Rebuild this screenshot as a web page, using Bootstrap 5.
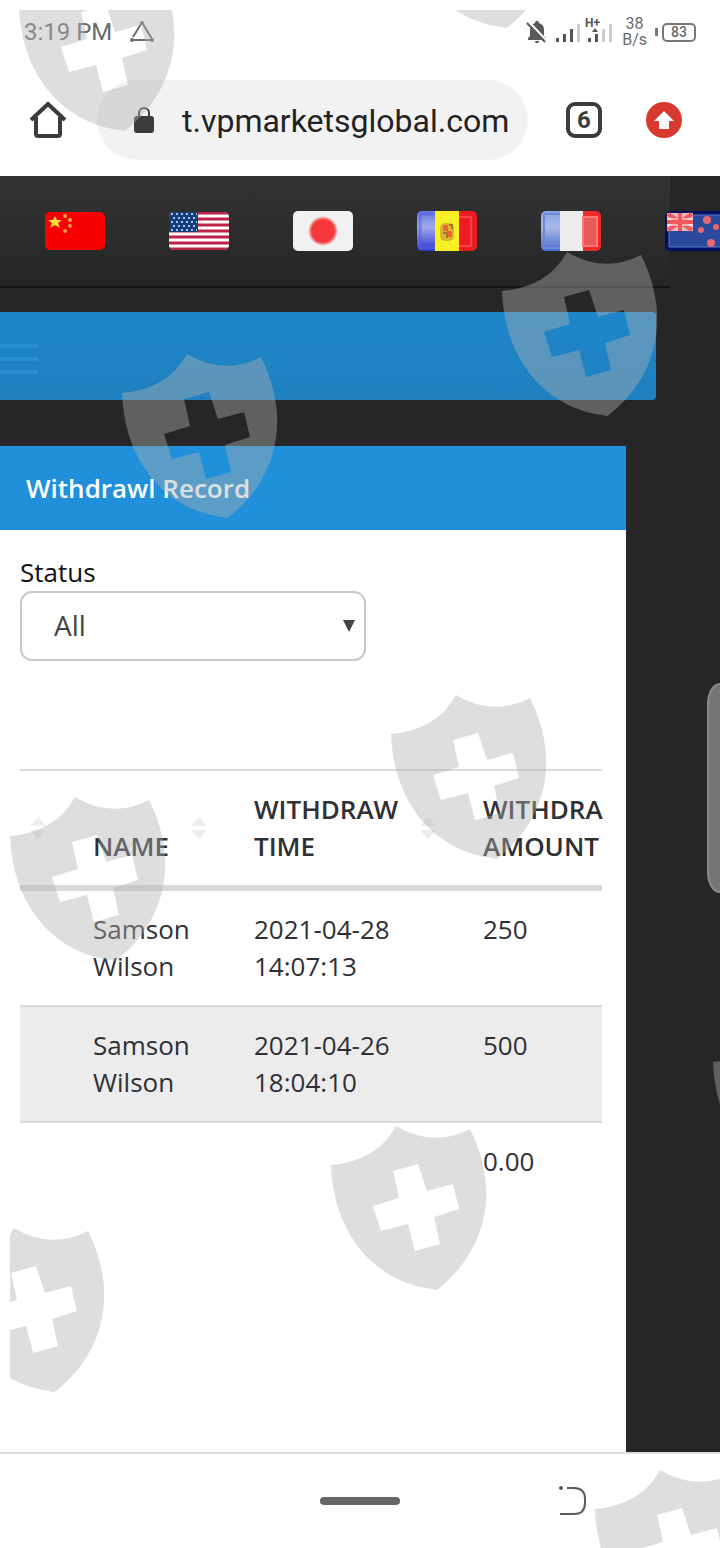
<!DOCTYPE html>
<html lang="en">
<head>
<meta charset="utf-8">
<meta name="viewport" content="width=device-width, initial-scale=1">
<title>Withdrawl Record</title>
<link href="https://cdn.jsdelivr.net/npm/bootstrap@5.3.0/dist/css/bootstrap.min.css" rel="stylesheet">
<style>
  body { font-family: "Open Sans", sans-serif; background: #262626; color: #333; }
  .screen { min-height: 100vh; overflow: hidden; }
  .phone-font { font-family: Roboto, sans-serif; }

  .status-bar { height: 64px; padding: 0 24px; color: #6b6b6b; }
  .clock { font-size: 24px; line-height: 28px; }
  .net-speed { font-size: 16px; line-height: 16px; text-align: center; }
  .battery { width: 34px; height: 19px; border: 2px solid #777; border-radius: 5px; font-size: 14px; line-height: 15px; font-weight: 500; text-align: center; }
  .battery-tip { width: 3px; height: 8px; background: #777; }

  .url-bar { height: 112px; padding: 0 38px 0 29px; }
  .url-pill { height: 80px; min-width: 0; border-radius: 40px; background: #f2f2f2; margin-left: 30px; margin-right: 38px; padding-left: 36px; gap: 27px; }
  .url-field { width: 0; font-size: 32px; line-height: 40px; color: #222; border: 0; background: transparent; padding: 2px 0 0; outline: 0; }
  .tab-count { width: 36px; height: 36px; border: 4px solid #3c3c3c; border-radius: 9px; font-size: 24px; line-height: 28px; font-weight: 700; color: #3c3c3c; background: none; margin-right: 44px; }
  .bare { border: 0; padding: 0; background: none; }

  .flag-bar { height: 112px; margin-right: 50px; padding-left: 45px; gap: 64px; background: linear-gradient(#333, #262626); border-bottom: 2px solid #141414; }
  .flag-bar svg { border-radius: 5px; }
  .menu-bar { height: 88px; margin: 24px 64px 46px 0; padding-top: 6px; background: linear-gradient(#1c86c9, #2080c0); border-radius: 0 4px 4px 0; }
  .menu-lines { width: 38px; height: 30px; }
  .menu-lines i { height: 4px; background: #288ed2; }

  .record { margin-right: 94px; }
  .record-head { height: 84px; padding: 0 26px; background: #2090da; font-size: 26px; line-height: 36px; font-weight: 600; }
  .record-body { padding: 24px 24px 0 20px; }
  .status-label { font-size: 26px; line-height: 37px; color: #111; }
  .status-select { width: 346px; height: 70px; padding: 0 32px 2px; border: 2px solid #c8c8c8; border-radius: 12px; color: #444; font-size: 28px; line-height: 38px;
    background: #fff url("data:image/svg+xml,%3Csvg xmlns='http://www.w3.org/2000/svg' viewBox='0 0 12 12'%3E%3Cpath d='M0 0h12L6 12z' fill='%23444'/%3E%3C/svg%3E") no-repeat right 9px center / 12px 12px; }

  .record-scroll { margin-top: 108px; border-top: 2px solid #dadada; }
  .record-table { table-layout: fixed; font-size: 26px; line-height: 37px; border-collapse: separate; border-spacing: 0; color: #2f2f36; }
  .record-table th, .record-table td { padding: 20px 0 20px 16px; vertical-align: top; border: 0; }
  .record-table td { padding-right: 16px; }
  .record-table th { font-weight: 600; vertical-align: bottom; border-bottom: 6px solid #dadada; }
  .record-table th:not(:last-child) {
    background: url("data:image/svg+xml,%3Csvg xmlns='http://www.w3.org/2000/svg' viewBox='0 0 16 22'%3E%3Cpath d='M0 9 8 0l8 9zM0 13h16l-8 9z' fill='%23ededed'/%3E%3C/svg%3E") no-repeat right 31px center / 16px 22px; }
  .record-table tbody td { border-bottom: 2px solid #dadada; }
  .record-table tbody tr:nth-child(even) { background: #ececec; }
  .w-index { width: 57px; } .w-name { width: 161px; } .w-time { width: 229px; }
  .record-table .w-time { padding-right: 60px; }

  .gesture-bar { height: 96px; border-top: 2px solid #dcdcdc; display: grid; grid-template-columns: 1fr 80px 1fr; align-items: center; }
  .home-pill { height: 8px; border-radius: 4px; background: #666; }
  .back-key { margin-left: 158px; justify-self: start; }

  .shields { pointer-events: none; z-index: 5; }
  .edge-handle { top: 683px; width: 13px; height: 210px; background: #757575; border: 2px solid #8a8a8a; border-right: 0; border-radius: 20px 0 0 20px / 32px 0 0 32px; }
</style>
</head>
<body>
<div class="screen position-relative d-flex flex-column">

  <header class="bg-white phone-font">
    <div class="status-bar d-flex align-items-center">
      <span class="clock me-3">3:19 PM</span>
      <svg width="28" height="24" viewBox="0 0 28 24" fill="none" stroke="#6b6b6b" stroke-width="2"><path d="M13 4 5 17M6 20h17M15 4l9 15"/><g fill="#6b6b6b" stroke="none"><circle cx="14" cy="3" r="2"/><circle cx="4" cy="20" r="2"/><circle cx="24" cy="20" r="2"/></g></svg>
      <div class="d-flex align-items-center ms-auto">
        <svg width="88" height="32" viewBox="0 0 88 32">
          <path d="M2 24v-2l2-2v-6c0-4 2-6 5-7 0-3 4-3 4 0 3 1 5 3 5 7v6l2 2v2zM9 25h4c0 3-4 3-4 0z" fill="#5a5a5a"/>
          <path d="M3 6l19 20" stroke="#fff" stroke-width="2"/><path d="M1 7l18 19" stroke="#5a5a5a" stroke-width="2"/>
          <g fill="#555"><path d="M30 22h3v4h-3zM37 18h3v8h-3zM44 13h3v13h-3zM62 22h3v4h-3zM69 18h3v8h-3zM66 16l3-4 3 4z"/></g>
          <g fill="#ccc"><path d="M51 8h3v18h-3zM76 13h3v13h-3zM83 8h3v18h-3z"/></g>
          <text x="59" y="11" font-size="12" font-weight="700" fill="#555">H+</text>
        </svg>
        <div class="net-speed ms-2">38<br>B/s</div>
        <span class="battery-tip ms-2 me-1"></span>
        <div class="battery">83</div>
      </div>
    </div>
    <div class="url-bar d-flex align-items-center">
      <button class="bare d-flex" aria-label="Home"><svg width="38" height="38" viewBox="0 0 38 38" fill="none" stroke="#3c3c3c" stroke-width="4"><path d="M2 19 19 3l17 16M7 16v17q0 2 2 2h20q2 0 2-2V16" stroke-linejoin="miter"/></svg></button>
      <div class="url-pill d-flex align-items-center flex-grow-1">
        <svg class="flex-shrink-0" width="22" height="28" viewBox="0 0 22 28"><path d="M6 11V7a5 5 0 0 1 10 0v4" fill="none" stroke="#3c3c3c" stroke-width="2"/><rect x="1" y="10" width="20" height="17" rx="3" fill="#3c3c3c"/></svg>
        <input class="url-field flex-grow-1" type="text" aria-label="Address" value="t.vpmarketsglobal.com">
      </div>
      <button class="tab-count p-0 flex-shrink-0" aria-label="Tabs">6</button>
      <button class="bare d-flex" aria-label="Update"><svg width="36" height="36" viewBox="0 0 36 36"><circle cx="18" cy="18" r="18" fill="#d93a30"/><path d="M18 9 8 19h5v8h10v-8h5z" fill="#fff"/></svg></button>
    </div>
  </header>

  <nav class="flag-bar d-flex align-items-center" aria-label="Language">
    <a href="#" class="d-flex" aria-label="Chinese"><svg width="60" height="38" viewBox="0 0 60 38"><path fill="#f70000" d="M0 0h60v38H0z"/><path fill="#ffe03a" d="m10 4 2 4h5l-4 3 2 5-5-3-5 3 2-5-4-3h5z"/><g fill="#ff9d3a"><circle cx="20" cy="4" r="2"/><circle cx="25" cy="8" r="2"/><circle cx="25" cy="14" r="2"/><circle cx="20" cy="19" r="2"/></g></svg></a>
    <a href="#" class="d-flex" aria-label="English"><svg width="60" height="38" viewBox="0 0 60 38"><path fill="#fff" d="M0 0h60v38H0z"/><path stroke="#bd2346" stroke-width="3" d="M0 1h60M0 7h60M0 13h60M0 19h60M0 25h60M0 31h60M0 37h60"/><path fill="#123f7c" d="M0 0h29v20H0z"/><path stroke="#a9c4e6" stroke-width="2" stroke-dasharray="2 3" d="M2 2h26M4 6h24M2 10h26M4 14h24M2 18h26"/></svg></a>
    <a href="#" class="d-flex" aria-label="Japanese"><svg width="60" height="40" viewBox="0 0 60 40"><defs><radialGradient id="sun"><stop offset=".75" stop-color="#f5383c"/><stop offset="1" stop-color="#f5383c" stop-opacity="0"/></radialGradient></defs><path fill="#f1f1f1" d="M0 0h60v40H0z"/><circle cx="30" cy="20" r="15" fill="url(#sun)"/></svg></a>
    <a href="#" class="d-flex" aria-label="Catalan"><svg width="60" height="40" viewBox="0 0 60 40"><defs><linearGradient id="sky" x2="0" y2="1"><stop stop-color="#6477e0"/><stop offset=".4" stop-color="#a3a9ea"/><stop offset="1" stop-color="#2f35d2"/></linearGradient></defs><path fill="url(#sky)" d="M0 0h20v40H0z"/><path fill="#f8f023" d="M18 0h24v40H18z"/><path fill="#ee1c20" d="M42 0h18v40H42z"/><path d="M3 3h15M3 3v34h15" fill="none" stroke="#5665dc" stroke-width="3" stroke-opacity=".6"/><path d="M42 6h12v29H42" fill="none" stroke="#f55" stroke-width="2" stroke-opacity=".7"/><rect x="23" y="12" width="14" height="18" rx="5" fill="#dcb52e"/><path fill="#e8663a" d="M26 14h5v6h-5zM30 20h5v6h-5z"/><path d="M26 22h4v5M32 14h3v4" fill="none" stroke="#a5762a" stroke-width="2"/></svg></a>
    <a href="#" class="d-flex" aria-label="French"><svg width="60" height="40" viewBox="0 0 60 40"><defs><linearGradient id="bleu" x2="0" y2="1"><stop stop-color="#8aa5e4"/><stop offset=".4" stop-color="#aab8e6"/><stop offset="1" stop-color="#4a6ed2"/></linearGradient></defs><path fill="url(#bleu)" d="M0 0h20v40H0z"/><path fill="#ececec" d="M19 0h23v40H19z"/><path fill="#ee2a2a" d="M42 0h18v40H42z"/><path fill="#e85a58" stroke="#f77" stroke-width="2" d="M42 6h14v29H42z"/><path d="M3 3h16M3 3v34h16" fill="none" stroke="#6d8ad9" stroke-width="2"/></svg></a>
    <a href="#" class="d-flex" aria-label="New Zealand English"><svg width="60" height="40" viewBox="0 0 60 40"><path fill="#04105e" d="M0 0h60v40H0z"/><path fill="#2b4a9e" stroke="#5c7ac4" d="M4 4h52v32H4z"/><path fill="#e5b8c4" d="M2 2h26v18H2z"/><path stroke="#f0585a" stroke-width="4" d="M2 11h26M15 2v18M3 3l24 16M27 3 3 19"/><path stroke="#fff" d="M2 8h11M17 8h11M2 14h11M17 14h11"/><g fill="#e8666e"><circle cx="42" cy="9" r="4"/><circle cx="36" cy="19" r="3"/><circle cx="51" cy="16" r="3"/><circle cx="46" cy="32" r="4"/></g></svg></a>
  </nav>

  <div class="menu-bar d-flex align-items-center">
    <button class="bare menu-lines d-flex flex-column justify-content-between" aria-label="Menu"><i class="w-100"></i><i class="w-100"></i><i class="w-100"></i></button>
  </div>

  <main class="record bg-white flex-grow-1">
    <h1 class="record-head d-flex align-items-center m-0 text-white">Withdrawl Record</h1>
    <div class="record-body">
      <label class="status-label d-block" for="status">Status</label>
      <select id="status" class="status-select form-select"><option>All</option></select>
      <div class="record-scroll">
        <table class="record-table w-100">
          <thead><tr><th class="w-index"></th><th class="w-name">NAME</th><th class="w-time">WITHDRAW TIME</th><th>WITHDRA<br>AMOUNT</th></tr></thead>
          <tbody>
            <tr><td></td><td>Samson Wilson</td><td>2021-04-28 14:07:13</td><td>250</td></tr>
            <tr><td></td><td>Samson Wilson</td><td>2021-04-26 18:04:10</td><td>500</td></tr>
          </tbody>
          <tfoot><tr><td></td><td></td><td></td><td>0.00</td></tr></tfoot>
        </table>
      </div>
    </div>
  </main>

  <footer class="gesture-bar bg-white">
    <span></span>
    <button class="bare home-pill" aria-label="Home screen"></button>
    <button class="bare back-key d-flex" aria-label="Back"><svg width="30" height="32" viewBox="0 0 30 32" fill="none" stroke="#5c5c5c" stroke-width="2"><path d="M9 3h7q11 0 11 11v4q0 11-11 11H2"/><circle cx="3" cy="3" r="1"/></svg></button>
  </footer>

  <div class="edge-handle position-absolute end-0"></div>

  <!-- scattered shield pattern laid over the whole screen -->
  <svg class="shields position-absolute top-0 start-0 w-100 h-100" aria-hidden="true">
    <defs>
      <path id="shield" fill-rule="evenodd" d="M65 0Q102 22 139 3C170 65 155 125 107 163Q105 165 101 163C50 157 3 115 0 39Q46 35 65 0ZM62 45 87 38 96 65 122 58 128 83 103 91 109 118 84 125 77 98 50 105 42 80 68 72Z"/>
      <clipPath id="inset"><rect x="10" y="10" width="100%" height="100%"/></clipPath>
    </defs>
    <g fill="#b0b0b0" fill-opacity=".42" clip-path="url(#inset)">
      <use href="#shield" x="19" y="-33"/>
      <use href="#shield" x="401" y="-136"/>
      <use href="#shield" x="502" y="252"/>
      <use href="#shield" x="122" y="354"/>
      <use href="#shield" x="391" y="695"/>
      <use href="#shield" x="10" y="797"/>
      <use href="#shield" x="713" y="1023"/>
      <use href="#shield" x="331" y="1126"/>
      <use href="#shield" x="-51" y="1228"/>
      <use href="#shield" x="595" y="1470"/>
    </g>
  </svg>
</div>
<script src="https://cdn.jsdelivr.net/npm/bootstrap@5.3.0/dist/js/bootstrap.bundle.min.js"></script>
</body>
</html>
